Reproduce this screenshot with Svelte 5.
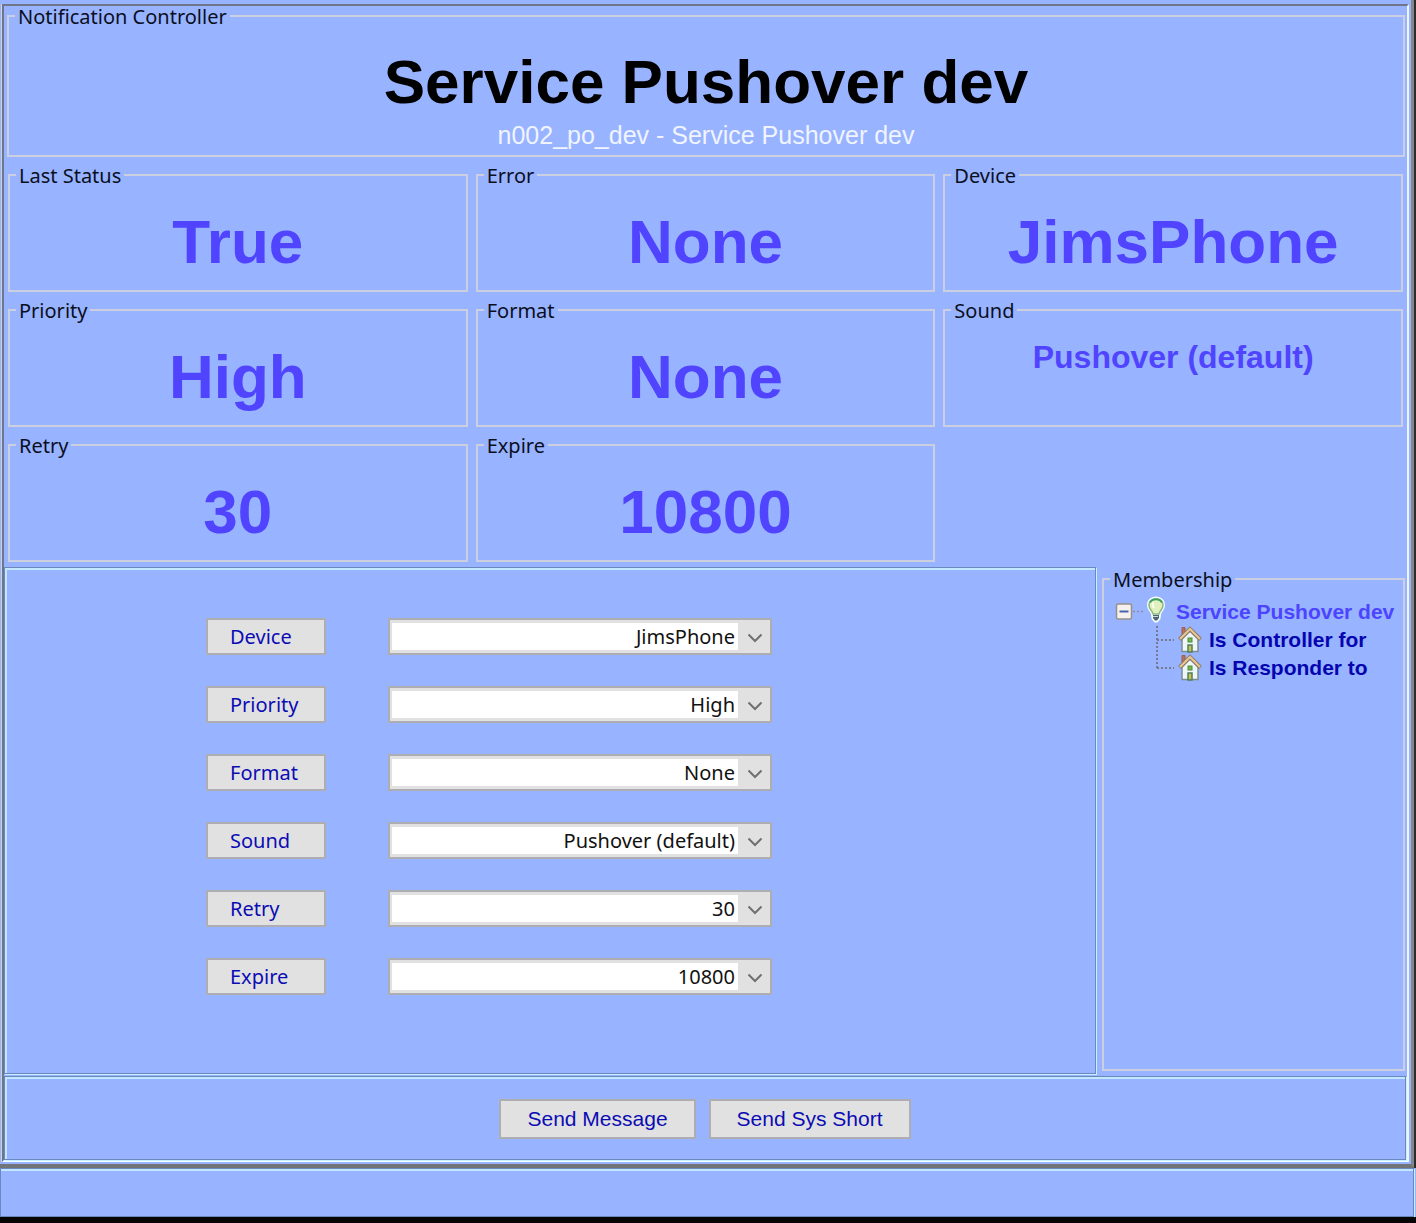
<script>
  const status = [
    { name: 'Last Status', value: 'True' },
    { name: 'Error', value: 'None' },
    { name: 'Device', value: 'JimsPhone' },
    { name: 'Priority', value: 'High' },
    { name: 'Format', value: 'None' },
    { name: 'Sound', value: 'Pushover (default)', small: true },
    { name: 'Retry', value: '30' },
    { name: 'Expire', value: '10800' }
  ];

  const settings = [
    { name: 'Device', value: 'JimsPhone' },
    { name: 'Priority', value: 'High' },
    { name: 'Format', value: 'None' },
    { name: 'Sound', value: 'Pushover (default)' },
    { name: 'Retry', value: '30' },
    { name: 'Expire', value: '10800' }
  ];

  const links = ['Is Controller for', 'Is Responder to'];
</script>

<div class="window">
  <main class="frame">
    <fieldset class="header">
      <legend>Notification Controller</legend>
      <h1>Service Pushover dev</h1>
      <p>n002_po_dev - Service Pushover dev</p>
    </fieldset>

    <div class="status">
      {#each status as item}
        <fieldset>
          <legend>{item.name}</legend>
          <div class="value" class:small={item.small}>{item.value}</div>
        </fieldset>
      {/each}
    </div>

    <div class="middle">
      <form class="etched settings">
        {#each settings as item}
          <button type="button">{item.name}</button>
          <div class="combo">
            <select aria-label={item.name}>
              <option>{item.value}</option>
            </select>
            <svg width="16" height="10" viewBox="0 0 16 10" aria-hidden="true">
              <path d="M1.5 1.5 L8 8 L14.5 1.5" fill="none" stroke="#707070" stroke-width="2" />
            </svg>
          </div>
        {/each}
      </form>

      <fieldset class="membership">
        <legend>Membership</legend>
        <div class="root">
          <svg width="58" height="28" viewBox="0 0 58 28" aria-hidden="true">
            <rect x="0.500" y="6" width="15" height="15" rx="1.500" fill="#f4f1ee" stroke="#96918c" stroke-width="1.500" />
            <path d="M3.500 13.500 H12.500" stroke="#4a62ac" stroke-width="2" />
            <path d="M17 13.500 H27" stroke="#8a8f9c" stroke-width="1.500" stroke-dasharray="2 2" />
            <path d="M40 -1.500 C34.500 -1.500 31 2.500 31 7 C31 11.500 34 13 35 16.500 L35.500 21 L38.500 24.500 H41.500 L44.500 21 L45 16.500 C46 13 49 11.500 49 7 C49 2.500 45.500 -1.500 40 -1.500 Z" fill="#f4fbf6" />
            <path d="M40 1 C36 1 33 3.500 33 7.500 C33 11 36.500 12.500 37 16 H43 C43.500 12.500 47 11 47 7.500 C47 3.500 44 1 40 1 Z" fill="#e2f0be" stroke="#8cba88" stroke-width="1.500" />
            <path d="M34 4.500 C36 0 44 0 46 4.500" fill="none" stroke="#3da066" stroke-width="2" />
            <path d="M37 4.500 Q36 7 38 10" fill="none" stroke="#fbfff0" stroke-width="2" />
            <path d="M37 17 H43 V20 L41 22.500 H39 L37 20 Z" fill="#4c6474" />
            <path d="M37 18.500 H42" stroke="#c8d8e0" stroke-width="1" />
          </svg>
          <span>Service Pushover dev</span>
        </div>
        <ul>
          {#each links as link, i}
            <li>
              <svg width="50" height="28" viewBox="0 0 50 28" aria-hidden="true">
                <path d={i === links.length - 1 ? 'M1 0 V14' : 'M1 0 V28'} stroke="#747a8c" stroke-width="2" stroke-dasharray="2 2" />
                <path d="M1 14 H18" stroke="#747a8c" stroke-width="2" stroke-dasharray="2 2" />
                <path d="M26 1.500 H29 V6 L26 9 Z" fill="#b87058" stroke="#9c604c" />
                <path d="M26 13 L34 5 L42 13 V25.500 H26 Z" fill="#eef6f8" stroke="#7c8e94" stroke-width="1.500" />
                <path d="M23.500 13.500 L34 3 L44.500 13.500" fill="none" stroke="#8d7b64" stroke-width="4" />
                <path d="M24 13 L34 3 L44 13" fill="none" stroke="#e6c795" stroke-width="2" />
                <rect x="32" y="12" width="4" height="4" fill="#74b84c" stroke="#4a8a3c" />
                <rect x="32" y="19" width="4" height="7" fill="#c5c44c" stroke="#4f7f60" stroke-width="1.500" />
              </svg>
              <a href="#{link.replaceAll(' ', '-').toLowerCase()}">{link}</a>
            </li>
          {/each}
        </ul>
      </fieldset>
    </div>

    <div class="etched actions">
      <button type="button">Send Message</button>
      <button type="button">Send Sys Short</button>
    </div>
  </main>
</div>
<footer class="etched"></footer>

<style>
  :global(body) {
    margin: 0;
    background: #050505;
  }

  :global(#app) {
    background: #98b3ff;
    font-family: 'Noto Sans', sans-serif;
    font-size: 20px;
    color: #0a0f1e;
  }

  .window {
    position: relative;
    margin-right: 2px;
    padding: 4px 2px 2px;
    border-right: 3px solid #85868a;
    border-bottom: 4px solid #737478;
  }

  .window::after {
    content: '';
    position: absolute;
    inset: 0 -5px -4px auto;
    width: 2px;
    background: #2c2c2c;
  }

  .frame {
    border: 2px solid;
    border-color: #70768a #eef5ff #f4ffff #70768a;
    box-shadow: -1px 0 #cdd2dc;
  }

  fieldset {
    min-width: 0;
    margin: 0;
    padding: 0 6px;
    border: 2px solid #cbcfe0;
  }

  legend {
    padding: 2px 3px 0;
    line-height: 18px;
    text-align: left;
    white-space: nowrap;
  }

  .header {
    margin: 0 2px 0 3px;
    padding: 20px 6px 6px;
  }

  h1,
  .value {
    margin: 0;
    font: bold 62px/72px 'Liberation Sans', sans-serif;
    text-align: center;
  }

  h1 {
    color: #000;
  }

  p {
    margin: 3px 0 0;
    font: 25px/28px 'Liberation Sans', sans-serif;
    color: #f0f4ff;
    text-align: center;
  }

  .status {
    display: grid;
    grid-template-columns: repeat(3, 1fr);
    gap: 8px;
    padding: 8px 4px 5px;
  }

  .status fieldset {
    padding: 21px 6px 12px;
  }

  .value {
    color: #5044ff;
  }

  .value.small {
    font-size: 32px;
    line-height: 32px;
  }

  .etched {
    border: 1px solid #6c87bd;
    box-shadow: 1px 1px #c6f2ff, inset 2px 2px #c0e8ff;
  }

  .middle {
    display: grid;
    grid-template-columns: 1fr 303px;
    column-gap: 6px;
    padding-right: 2px;
  }

  .settings {
    display: grid;
    grid-template-columns: 120px 384px;
    gap: 31px 62px;
    align-content: start;
    padding: 50px 0 78px 201px;
  }

  button {
    border: 2px solid #adadb2;
    background: #e1e1e1;
    color: #0c0cb4;
  }

  .settings button {
    height: 37px;
    padding: 0 0 0 22px;
    font: 20px/28px 'Noto Sans', sans-serif;
    text-align: left;
  }

  .combo {
    position: relative;
    display: grid;
  }

  select {
    appearance: none;
    height: 37px;
    padding: 0 35px 0 6px;
    border: 2px solid #adadb2;
    border-radius: 0;
    background: linear-gradient(#fff, #fff) 2px 3px / calc(100% - 34px) calc(100% - 6px) no-repeat #e1e1e1;
    font: 20px/28px 'Noto Sans', sans-serif;
    color: #111;
    text-align: right;
    text-align-last: right;
  }

  .combo svg {
    position: absolute;
    right: 9px;
    top: 15px;
    pointer-events: none;
  }

  .membership {
    margin: 2px 0 3px;
    padding-top: 9px;
    padding-right: 0;
  }

  .root,
  li {
    display: flex;
    align-items: center;
    height: 28px;
    font: bold 21px/28px 'Liberation Sans', sans-serif;
    white-space: nowrap;
  }

  .root {
    padding-left: 6px;
    gap: 2px;
    color: #4c44ff;
  }

  ul {
    margin: 0;
    padding: 0 0 0 46px;
    list-style: none;
  }

  li {
    gap: 3px;
  }

  svg {
    flex: none;
    overflow: visible;
  }

  a {
    color: #0505b0;
    text-decoration: none;
  }

  .actions {
    display: flex;
    justify-content: center;
    gap: 13px;
    margin: 2px 1px 0 0;
    padding: 22px 0 20px;
  }

  .actions button {
    height: 40px;
    padding: 0 26px;
    font: 21px/30px 'Liberation Sans', sans-serif;
  }

  footer {
    height: 47px;
    margin: 0 2px 0 0;
    border-left-width: 0;
  }

  footer.etched {
    box-shadow: 1px 1px #c6f2ff, inset 0 2px #c0e8ff;
  }
</style>
